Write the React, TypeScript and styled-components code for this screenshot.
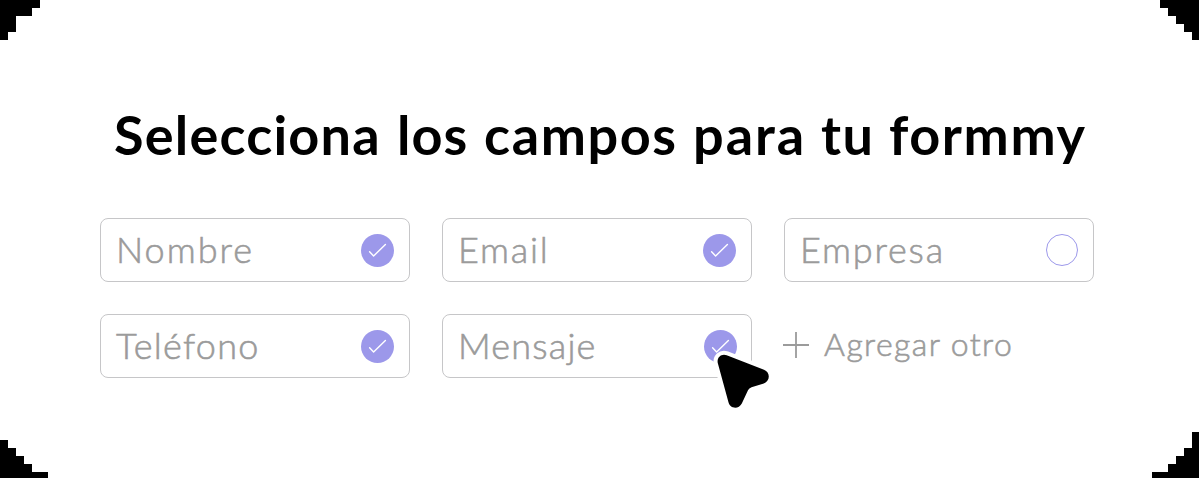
import React from "react";
import styled, { createGlobalStyle } from "styled-components";

const GlobalStyle = createGlobalStyle`
  * { box-sizing: border-box; }
  body { margin: 0; background: #fff; }
`;

const Panel = styled.main`
  position: relative;
  width: 1199px;
  height: 478px;
  padding: 99px 105px 0 100px;
  overflow: hidden;
  background: #fff;
  font-family: Lato, "Open Sans", sans-serif;
`;

const Title = styled.h1`
  display: flex;
  margin: 0 0 47px 14px;
  height: 72px;
  line-height: 72px;
  font-size: 54px;
  font-weight: 700;
  color: #000;
  white-space: nowrap;
`;

const Word = styled.span<{ $width: number; $spacing: number }>`
  flex: none;
  width: ${(p) => p.$width}px;
  letter-spacing: ${(p) => p.$spacing}px;
`;

const Grid = styled.div`
  display: grid;
  grid-template-columns: repeat(3, 310px);
  grid-auto-rows: 64px;
  gap: 32px;
`;

const Field = styled.div<{ $inset: number }>`
  display: flex;
  align-items: center;
  justify-content: space-between;
  padding: 0 ${(p) => p.$inset}px 0 15px;
  border: 1px solid #c6c6c8;
  border-radius: 8px;
`;

const Label = styled.span<{ $spacing: number }>`
  padding-bottom: 2px;
  font-size: 36px;
  line-height: 60px;
  font-weight: 300;
  color: #9b9b9b;
  -webkit-text-stroke: 0.6px #9b9b9b;
  letter-spacing: ${(p) => p.$spacing}px;
`;

const Mark = styled.svg`
  flex: none;
  display: block;
`;

const AddButton = styled.button`
  display: flex;
  align-items: center;
  gap: 15px;
  margin-left: -1px;
  padding: 0 0 2px;
  border: 0;
  background: none;
  font: 300 32px/60px Lato, "Open Sans", sans-serif;
  letter-spacing: 1.4px;
  color: #9b9b9b;
  -webkit-text-stroke: 0.6px #9b9b9b;
  white-space: nowrap;
`;

const AddLabel = styled.span`
  padding-bottom: 3px;
`;

const Cursor = styled.svg`
  position: absolute;
  left: 712px;
  top: 349px;
`;

const Corner = styled.svg<{ $v: "top" | "bottom"; $h: "left" | "right" }>`
  position: absolute;
  ${(p) => p.$v}: 0;
  ${(p) => p.$h}: 0;
`;

const words = [
  { text: "Selecciona", width: 283, spacing: 1.2 },
  { text: "los", width: 87, spacing: 1 },
  { text: "campos", width: 209, spacing: 1.6 },
  { text: "para", width: 128, spacing: 2 },
  { text: "tu", width: 68, spacing: 1.5 },
  { text: "formmy", width: 200, spacing: 1.6 },
];

const fields = [
  { name: "Nombre", checked: true, spacing: 2, inset: 15 },
  { name: "Email", checked: true, spacing: 1.8, inset: 15 },
  { name: "Empresa", checked: false, spacing: 1.8, inset: 15 },
  { name: "Teléfono", checked: true, spacing: 1.3, inset: 15 },
  { name: "Mensaje", checked: true, spacing: 1.2, inset: 14 },
];

function Check({ checked }: { checked: boolean }) {
  return checked ? (
    <Mark width="33" height="33" viewBox="0 0 33 33">
      <circle cx="16.5" cy="16.5" r="16.5" fill="#9c98ea" />
      <path d="M8.6 17.8 12.6 22 24.4 10.4" fill="none" stroke="#fff" strokeWidth="1.4" strokeLinecap="round" strokeLinejoin="round" />
    </Mark>
  ) : (
    <Mark width="32" height="32" viewBox="0 0 32 32">
      <circle cx="16" cy="16" r="15.5" fill="none" stroke="#9c98ea" />
    </Mark>
  );
}

export default function App() {
  return (
    <Panel>
      <GlobalStyle />
      <Title>
        {words.map((w) => (
          <Word key={w.text} $width={w.width} $spacing={w.spacing}>{w.text} </Word>
        ))}
      </Title>
      <Grid>
        {fields.map((f) => (
          <Field key={f.name} $inset={f.inset}>
            <Label $spacing={f.spacing}>{f.name}</Label>
            <Check checked={f.checked} />
          </Field>
        ))}
        <AddButton>
          <Mark width="26" height="26" viewBox="0 0 26 26">
            <path d="M0 13H26M13 0V26" stroke="#9b9b9b" strokeWidth="1.8" />
          </Mark>
          <AddLabel>Agregar otro</AddLabel>
        </AddButton>
      </Grid>
      <Cursor width="62" height="66" viewBox="0 0 62 66">
        <path
          d="M14.7 6.3 52 20.7C58.5 23.2 58.3 32.3 51.8 34.4L39.5 38.2Q37 39 36 41.3L29.8 54.5C26.5 60.8 18 59.8 16.4 53L5.9 14.6C4.3 8.8 9.2 4.2 14.7 6.3Z"
          fill="#000" stroke="#fff" strokeWidth="8" strokeLinejoin="round" paintOrder="stroke"
        />
      </Cursor>
      <Corner $v="top" $h="left" width="40" height="40" shapeRendering="crispEdges">
        <path d="M0 0H40V8H32V16H16V32H8V40H0Z" />
      </Corner>
      <Corner $v="top" $h="right" width="39" height="40" shapeRendering="crispEdges">
        <path d="M0 0H39V40H32V32H24V24H16V16H8V8H0Z" />
      </Corner>
      <Corner $v="bottom" $h="left" width="48" height="38" shapeRendering="crispEdges">
        <path d="M0 0H8V8H16V16H24V24H32V32H48V38H0Z" />
      </Corner>
      <Corner $v="bottom" $h="right" width="47" height="46" shapeRendering="crispEdges">
        <path d="M47 0H40V16H32V24H24V32H16V40H0V46H47Z" />
      </Corner>
    </Panel>
  );
}
